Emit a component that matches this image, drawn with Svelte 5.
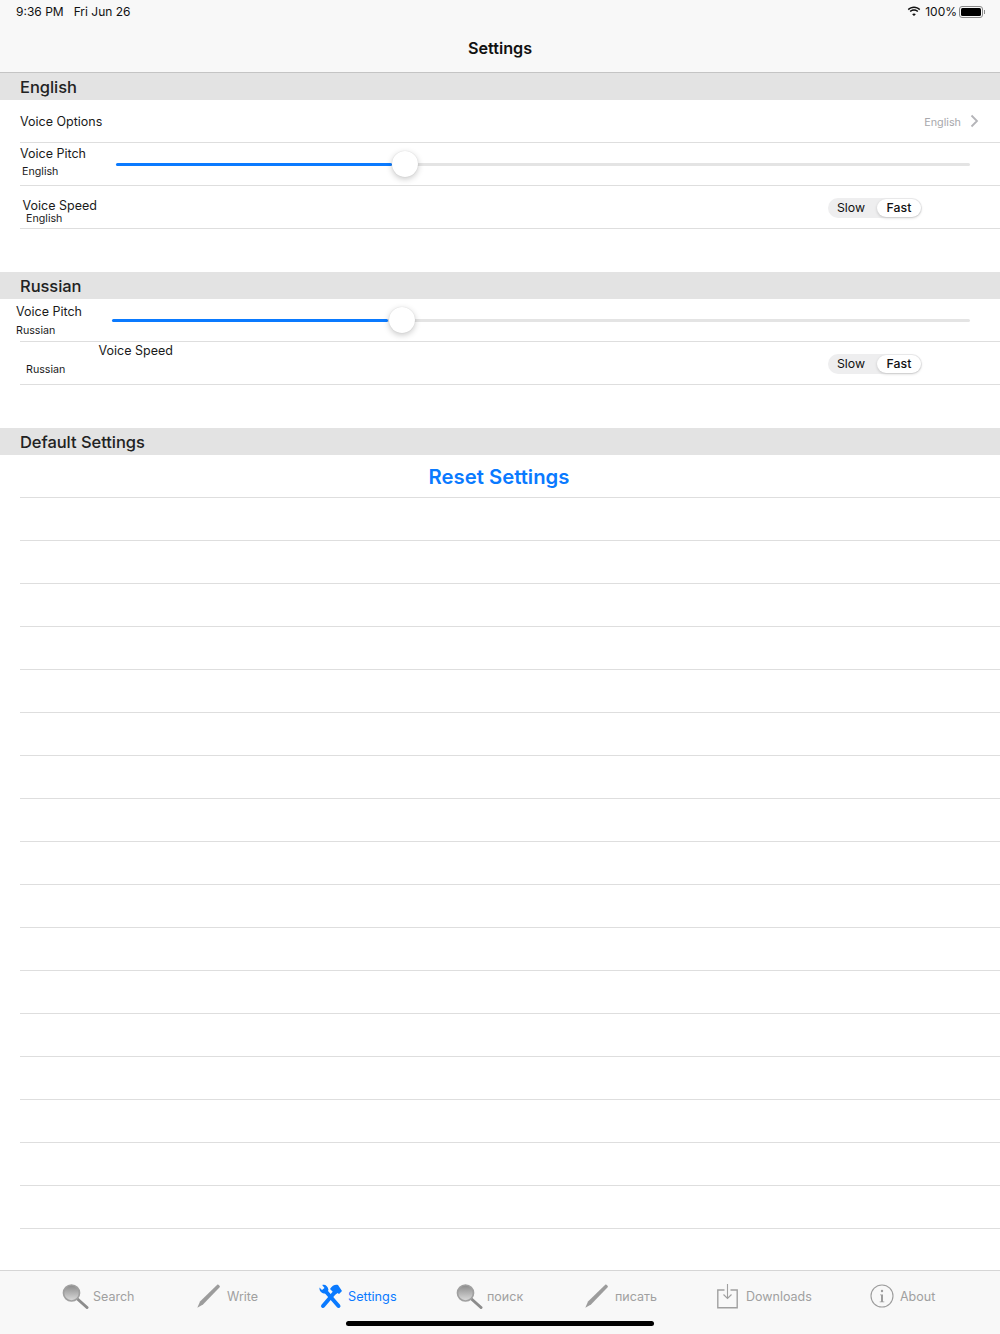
<script>
  const blanks = Array.from({ length: 17 });
  const tabs = [
    { label: 'Search', icon: 'search' },
    { label: 'Write', icon: 'pen' },
    { label: 'Settings', icon: 'tools', active: true },
    { label: 'поиск', icon: 'search' },
    { label: 'писать', icon: 'pen' },
    { label: 'Downloads', icon: 'download' },
    { label: 'About', icon: 'info' }
  ];
</script>

<div class="screen">
  <header class="nav">
    <div class="status">
      <div class="time"><span>9:36 PM</span><span>Fri Jun 26</span></div>
      <div class="sys">
        <svg class="wifi" width="14" height="11" viewBox="0 0 15 12">
          <path d="M7.5 2.2c2.2 0 4.2.9 5.7 2.3l1.100-1.200C12.500 1.500 10.100.5 7.500.5S2.500 1.500.7 3.300l1.100 1.200C3.300 3.100 5.300 2.200 7.500 2.200z" fill="#111"/>
          <path d="M7.500 5.200c1.400 0 2.600.500 3.600 1.400l1.100-1.200C11 4.200 9.300 3.500 7.500 3.500s-3.500.700-4.700 1.900l1.100 1.200c1-.900 2.200-1.400 3.600-1.400z" fill="#111"/>
          <path d="M7.500 8.100c-.800 0-1.500.300-2 .800l2 2.100 2-2.100c-.500-.500-1.200-.800-2-.800z" fill="#111"/>
        </svg>
        <span>100%</span>
        <span class="battery"><span class="level"></span></span>
        <span class="nub"></span>
      </div>
    </div>
    <h1>Settings</h1>
  </header>

  <main>
    <h2>English</h2>
    <div class="row options">
      <span class="label">Voice Options</span>
      <span class="detail">English</span>
      <svg class="chevron" width="9" height="14" viewBox="0 0 9 14"><path d="M1.500 1.500 7 7l-5.500 5.500" fill="none" stroke="#b4b4b8" stroke-width="1.800"/></svg>
    </div>
    <div class="row pitch-en">
      <div class="text"><span class="label">Voice Pitch</span><span class="sub">English</span></div>
      <div class="slider"><div class="fill"></div><div class="thumb"></div></div>
    </div>
    <div class="row speed-en">
      <div class="text"><span class="label">Voice Speed</span><span class="sub">English</span></div>
      <div class="segment"><span>Slow</span><span class="on">Fast</span></div>
    </div>
    <div class="row spacer"></div>

    <h2>Russian</h2>
    <div class="row pitch-ru">
      <div class="text"><span class="label">Voice Pitch</span><span class="sub">Russian</span></div>
      <div class="slider"><div class="fill"></div><div class="thumb"></div></div>
    </div>
    <div class="row speed-ru">
      <div class="text"><span class="label">Voice Speed</span><span class="sub">Russian</span></div>
      <div class="segment"><span>Slow</span><span class="on">Fast</span></div>
    </div>
    <div class="row spacer"></div>

    <h2>Default Settings</h2>
    <div class="row reset"><span>Reset Settings</span></div>
    {#each blanks as _}
      <div class="row"></div>
    {/each}
  </main>

  <nav class="tabs">
    {#each tabs as t}
      <div class="tab {t.icon}" class:active={t.active}>
        {#if t.icon === 'search'}
          <svg width="27" height="25" viewBox="0 0 27 25">
            <defs><linearGradient id="lens" x1="0" y1="0" x2="0" y2="1"><stop offset="0" stop-color="#8a8a8a"/><stop offset="1" stop-color="#dcdcdc"/></linearGradient></defs>
            <path d="M15.500 15l9.500 8.500" stroke="#8c8c8c" stroke-width="3" stroke-linecap="round"/>
            <circle cx="9.500" cy="9" r="8" fill="url(#lens)" stroke="#a0a0a0" stroke-width="1.700"/>
          </svg>
        {:else if t.icon === 'pen'}
          <svg width="24" height="24" viewBox="0 0 24 24"><path d="M.3 23.700 3 17.500 20.500.5c.800-.400 2.800 1.500 2.400 2.400L6 20.500z" fill="#9c9c9c"/></svg>
        {:else if t.icon === 'tools'}
          <svg width="23" height="25" viewBox="0 0 23 25">
            <path d="M6 6.500 19.500 22" stroke="#0a7aff" stroke-width="4" stroke-linecap="round"/>
            <path d="M.5 3.500 3 6l2.500-2L3.200 1C6 0 9 2 9.500 6L7 9.500C4 10 0 8 .5 3.500z" fill="#0a7aff"/>
            <path d="M16 8 4 22" stroke="#0a7aff" stroke-width="4" stroke-linecap="round"/>
            <path d="M11 5c2-4 6-5 8-4l4 6-3 3-1.500-1-2 1.500L13 7z" fill="#0a7aff"/>
          </svg>
        {:else if t.icon === 'download'}
          <svg width="21" height="25" viewBox="0 0 21 25" fill="none" stroke="#a0a0a0">
            <path d="M7.500 6H.8v17.800h19.400V6h-6.700" stroke-width="1.400"/>
            <path d="M10.500 0v14.500M6.500 10.500l4 4 4-4" stroke-width="1.100"/>
          </svg>
        {:else}
          <svg width="24" height="24" viewBox="0 0 24 24">
            <circle cx="12" cy="12" r="11" fill="none" stroke="#9c9c9c" stroke-width="1.100"/>
            <circle cx="12" cy="7" r="1.200" fill="#9c9c9c"/>
            <path d="M10 10.500h3v7h1.300v.800H9.700v-.800H11v-6.200h-1z" fill="#9c9c9c"/>
          </svg>
        {/if}
        <span>{t.label}</span>
      </div>
    {/each}
    <div class="home"></div>
  </nav>
</div>

<style>
  :global(body) { margin: 0; background: #fff; }
  .screen {
    width: 1000px; height: 1334px; overflow: hidden; display: flex; flex-direction: column;
    font-family: Inter, "Liberation Sans", sans-serif; color: #111; background: #fff;
  }
  .nav { height: 72px; background: #f8f8f8; border-bottom: 1px solid #c4c4c4; flex: none; }
  .status { height: 23px; display: flex; justify-content: space-between; align-items: center; padding: 0 15px 0 16px; font-size: 12px; }
  .time { display: flex; gap: 10px; }
  .sys { display: flex; align-items: center; }
  .wifi { margin-right: 4px; }
  .battery { width: 24px; height: 12px; border: 1px solid #8a8a8a; border-radius: 3px; padding: 1px; box-sizing: border-box; margin-left: 2px; display: flex; }
  .level { flex: 1; background: #000; border-radius: 1.500px; }
  .nub { width: 1px; height: 4px; background: #8a8a8a; margin-left: 1px; }
  h1 { margin: 14px 0 0; font-size: 16.200px; font-weight: 600; text-align: center; line-height: 22px; }
  main { flex: 1; }
  h2 { margin: 0; height: 27px; line-height: 28px; background: #e3e3e3; padding-left: 20px; font-size: 16.500px; font-weight: 500; color: #222; letter-spacing: -.05px; overflow: hidden; }
  .row { height: 42px; margin-left: 20px; border-bottom: 1px solid #dedede; display: flex; align-items: center; position: relative; }
  .label { font-size: 12.500px; color: #1a1a1a; line-height: 16px; white-space: nowrap; }
  .sub { font-size: 10.700px; color: #1a1a1a; line-height: 14px; white-space: nowrap; }
  .text { display: flex; flex-direction: column; }
  .spacer { border-bottom-color: transparent; }
  .options .label { padding-top: 2px; }
  .detail { margin: 2px -1px 0 auto; font-size: 10.800px; color: #a8a8ac; }
  .chevron { margin: 0 21px 0 10px; }

  .slider { position: relative; height: 3px; background: #e4e4e4; border-radius: 2px; flex: none; }
  .fill { position: absolute; left: 0; top: 0; bottom: 0; background: #0a7aff; border-radius: 2px; }
  .thumb { position: absolute; width: 26px; height: 26px; top: -12px; border-radius: 50%; background: #fff; box-shadow: 0 2px 6px rgba(0,0,0,.22), 0 0 1px rgba(0,0,0,.15); }

  .pitch-en .text { width: 96px; gap: 3px; padding-bottom: 4px; }
  .pitch-en .sub { margin-left: 2px; }
  .pitch-en .slider { width: 854px; }
  .pitch-en .fill { width: 276px; }
  .pitch-en .thumb { left: 276px; }

  .pitch-ru { align-items: flex-start; }
  .pitch-ru .text { margin-left: -4px; width: 96px; padding-top: 5px; gap: 4px; }
  .pitch-ru .slider { width: 858px; margin-top: 20px; }
  .pitch-ru .fill { width: 276px; }
  .pitch-ru .thumb { left: 277px; }

  .speed-en .text { margin-left: 2.500px; padding-top: 9px; }
  .speed-en .sub { margin: -2px 0 0 3.500px; }
  .speed-ru .text { margin-left: 6px; gap: 4px; padding-top: 1px; align-self: flex-start; }
  .speed-ru .label { margin-left: 72.500px; }

  .segment { position: absolute; left: 808px; top: 12px; width: 94px; height: 20px; border-radius: 10px; background: #eeeeef; display: flex; align-items: center; font-size: 12.300px; box-sizing: border-box; }
  .segment span { flex: 1; text-align: center; line-height: 18px; }
  .segment span:first-child { flex: 0 0 49px; box-sizing: border-box; padding-right: 3px; }
  .segment .on { height: 18px; background: #fff; border-radius: 9px; box-shadow: 0 1px 3px rgba(0,0,0,.18); margin-right: 1px; font-weight: 500; }

  .reset { justify-content: center; padding-right: 22px; font-size: 20.300px; font-weight: 600; color: #0a7aff; }

  .tabs { position: relative; flex: none; background: #f8f8f8; border-top: 1px solid #d6d6d6; display: grid; grid-template-columns: 135px 122px 137px 129px 132px 153px 1fr; padding: 12px 0 0 62px; height: 51px; }
  .tab { display: flex; align-items: center; gap: 6px; height: 26px; font-size: 12.500px; color: #a0a0a0; }
  .tab.search { gap: 4px; }
  .tab.tools { font-size: 12.700px; }
  .tab.download { gap: 8px; }
  .tab.active { color: #0a7aff; }
  .home { position: absolute; left: 346px; width: 308px; top: 50px; height: 5px; border-radius: 3px; background: #000; }
</style>
